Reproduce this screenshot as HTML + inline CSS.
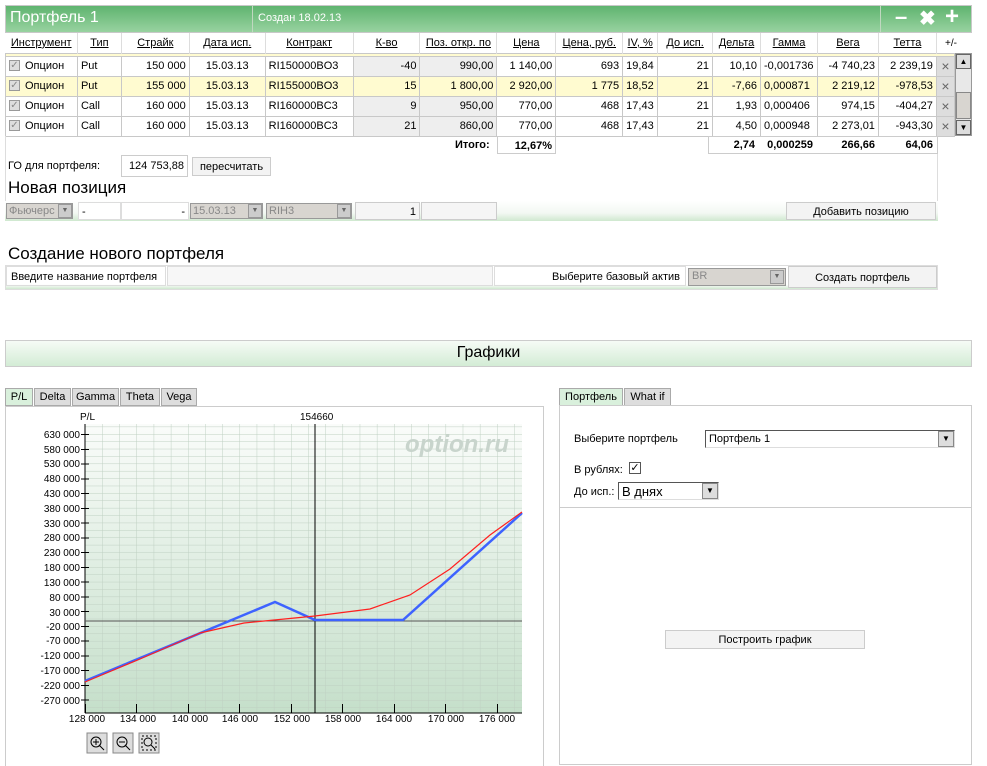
<!DOCTYPE html>
<html><head><meta charset="utf-8"><style>
*{box-sizing:border-box;margin:0;padding:0}
body{width:987px;height:758px;background:#fff;position:relative;overflow:hidden;font-family:"Liberation Sans",sans-serif;font-size:11px;color:#000}
.a{position:absolute}
.hdr{left:5px;top:5px;width:967px;height:28px;background:linear-gradient(#5fb46f,#98d2a0);border:1px solid #c8c8c8}
table{border-collapse:collapse;position:absolute;left:5px;font-size:11px}
td{border:1px solid #c8c8c8;height:20px;padding:0 3px;white-space:nowrap}
th{font-weight:normal;text-decoration:underline;height:20px;border-right:1px solid #ddd;background:#fff}
.r{text-align:right}.c{text-align:center}
.g{background:#eee}
.y td{background:#fffbd0}
.cb{display:inline-block;width:11px;height:11px;border:1px solid #999;background:#ddd;vertical-align:middle;margin-right:5px;position:relative;top:-1px;color:#888;font-size:10px;line-height:9px;text-align:center}
.x{background:#ddd;text-align:center;color:#666;font-size:14px;padding:0}
.btn{background:#f3f3f3;border:1px solid #ccc;text-align:center}
.gray{background:#d8d5d0;border:1px solid #999;color:#888}
.dd{position:absolute;width:14px;height:14px;background:#ccc;border:1px solid #999;font-size:7px;text-align:center;line-height:12px;color:#666}
.tab{top:388px;height:18px;border:1px solid #aaa;background:#ddd;text-align:center;line-height:16px;font-size:11px}
</style></head><body>
<div class="a hdr"></div>
<div class="a" style="left:252px;top:5px;width:1px;height:28px;background:#c0d8c0"></div>
<div class="a" style="left:880px;top:5px;width:1px;height:28px;background:#c0d8c0"></div>
<div class="a" style="left:10px;top:9px;color:#fff;font-size:16px">Портфель 1</div>
<div class="a" style="left:258px;top:12px;color:#fff;font-size:11px">Создан 18.02.13</div>
<div class="a" style="left:895px;top:4px;color:#fff;font-size:22px;font-weight:bold">&#8211;</div>
<div class="a" style="left:919px;top:6px;color:#fff;font-size:20px;font-weight:bold">&#10006;</div>
<div class="a" style="left:945px;top:3px;color:#fff;font-size:24px;font-weight:bold">+</div>

<table style="top:33px;width:950px">
<tr><th style="width:72px">Инструмент</th><th style="width:44px">Тип</th><th style="width:68px">Страйк</th><th style="width:76px">Дата исп.</th><th style="width:88px">Контракт</th><th style="width:67px">К-во</th><th style="width:77px">Поз. откр. по</th><th style="width:59px">Цена</th><th style="width:67px">Цена, руб.</th><th style="width:35px">IV, %</th><th style="width:55px">До исп.</th><th style="width:48px">Дельта</th><th style="width:57px">Гамма</th><th style="width:61px">Вега</th><th style="width:58px">Тетта</th><th style="width:18px;text-decoration:none;border:none"></th></tr>
<tr class="y"><td colspan="16" style="height:3px;padding:0"></td></tr>
<tr><td><span class="cb">✓</span>Опцион</td><td>Put</td><td class="r">150 000</td><td class="c">15.03.13</td><td>RI150000BO3</td><td class="r g">-40</td><td class="r g">990,00</td><td class="r">1 140,00</td><td class="r">693</td><td>19,84</td><td class="r">21</td><td class="r">10,10</td><td>-0,001736</td><td class="r">-4 740,23</td><td class="r">2 239,19</td><td class="x">×</td></tr>
<tr class="y"><td><span class="cb">✓</span>Опцион</td><td>Put</td><td class="r">155 000</td><td class="c">15.03.13</td><td>RI155000BO3</td><td class="r">15</td><td class="r">1 800,00</td><td class="r">2 920,00</td><td class="r">1 775</td><td>18,52</td><td class="r">21</td><td class="r">-7,66</td><td>0,000871</td><td class="r">2 219,12</td><td class="r">-978,53</td><td class="x" style="background:#ddd">×</td></tr>
<tr><td><span class="cb">✓</span>Опцион</td><td>Call</td><td class="r">160 000</td><td class="c">15.03.13</td><td>RI160000BC3</td><td class="r g">9</td><td class="r g">950,00</td><td class="r">770,00</td><td class="r">468</td><td>17,43</td><td class="r">21</td><td class="r">1,93</td><td>0,000406</td><td class="r">974,15</td><td class="r">-404,27</td><td class="x">×</td></tr>
<tr><td><span class="cb">✓</span>Опцион</td><td>Call</td><td class="r">160 000</td><td class="c">15.03.13</td><td>RI160000BC3</td><td class="r g">21</td><td class="r g">860,00</td><td class="r">770,00</td><td class="r">468</td><td>17,43</td><td class="r">21</td><td class="r">4,50</td><td>0,000948</td><td class="r">2 273,01</td><td class="r">-943,30</td><td class="x">×</td></tr>
</table>
<div class="a" style="left:945px;top:38px;font-size:10px">+/-</div>
<div class="a" style="left:955px;top:53px;width:17px;height:83px;background:#e8e8e8;border:1px solid #999"></div>
<div class="a" style="left:956px;top:54px;width:15px;height:15px;background:#ddd;border:1px solid #666;font-size:8px;text-align:center;line-height:13px">▲</div>
<div class="a" style="left:956px;top:92px;width:15px;height:27px;background:#d8d5d0;border:1px solid #888"></div>
<div class="a" style="left:956px;top:120px;width:15px;height:15px;background:#ddd;border:1px solid #666;font-size:8px;text-align:center;line-height:13px">▼</div>
<div class="a" style="left:5px;top:136px;width:933px;height:85px;border-left:1px solid #ddd;border-right:1px solid #ddd"></div>
<div class="a" style="left:455px;top:139px;font-weight:bold">Итого:</div>
<div class="a" style="left:497px;top:136px;width:59px;height:18px;border:1px solid #ccc;font-weight:bold;text-align:right;padding:3px 3px 0">12,67%</div>
<div class="a" style="left:708px;top:136px;width:230px;height:18px;border:1px solid #ccc"></div>
<div class="a" style="left:705px;top:139px;width:50px;text-align:right;font-weight:bold">2,74</div>
<div class="a" style="left:760px;top:139px;width:53px;text-align:right;font-weight:bold">0,000259</div>
<div class="a" style="left:818px;top:139px;width:57px;text-align:right;font-weight:bold">266,66</div>
<div class="a" style="left:879px;top:139px;width:54px;text-align:right;font-weight:bold">64,06</div>

<div class="a" style="left:8px;top:160px">ГО для портфеля:</div>
<div class="a" style="left:121px;top:155px;width:67px;height:22px;border:1px solid #ccc;text-align:right;padding:4px 3px 0">124 753,88</div>
<div class="a btn" style="left:192px;top:157px;width:79px;height:19px;padding-top:3px">пересчитать</div>
<div class="a" style="left:8px;top:178px;font-size:17px">Новая позиция</div>
<div class="a" style="left:5px;top:201px;width:933px;height:20px;background:linear-gradient(#fff 0,#f3f8f3 60%,#cfe8cf)"></div>
<div class="a gray" style="left:6px;top:203px;width:67px;height:16px;padding:1px 2px">Фьючерс</div>
<div class="dd" style="left:58px;top:204px">▼</div>
<div class="a" style="left:78px;top:202px;width:43px;height:18px;background:#fff;border:1px solid #ddd;padding:3px">-</div>
<div class="a" style="left:121px;top:202px;width:68px;height:18px;background:#fff;border:1px solid #ddd;padding:3px;text-align:right">-</div>
<div class="a gray" style="left:190px;top:203px;width:73px;height:16px;padding:1px 2px">15.03.13</div>
<div class="dd" style="left:248px;top:204px">▼</div>
<div class="a gray" style="left:266px;top:203px;width:86px;height:16px;padding:1px 2px">RIH3</div>
<div class="dd" style="left:337px;top:204px">▼</div>
<div class="a" style="left:355px;top:202px;width:65px;height:18px;background:#f5f5f5;border:1px solid #ccc;padding:3px;text-align:right">1</div>
<div class="a" style="left:421px;top:202px;width:76px;height:18px;background:#f5f5f5;border:1px solid #ccc"></div>
<div class="a btn" style="left:786px;top:202px;width:150px;height:18px;padding-top:3px">Добавить позицию</div>

<div class="a" style="left:8px;top:244px;font-size:17px">Создание нового портфеля</div>
<div class="a" style="left:5px;top:265px;width:933px;height:25px;border:1px solid #ddd;background:linear-gradient(#fff 80%,#cfe8cf)"></div>
<div class="a" style="left:6px;top:266px;width:160px;height:20px;border:1px solid #ddd;padding:4px 4px 0">Введите название портфеля</div>
<div class="a" style="left:167px;top:266px;width:326px;height:20px;border:1px solid #ddd;background:#f7f7f7"></div>
<div class="a" style="left:494px;top:266px;width:192px;height:20px;border:1px solid #ddd;padding:4px 5px 0;text-align:right">Выберите базовый актив</div>
<div class="a gray" style="left:688px;top:268px;width:98px;height:18px;padding:1px 3px">BR</div>
<div class="dd" style="left:770px;top:270px">▼</div>
<div class="a btn" style="left:788px;top:266px;width:149px;height:22px;padding-top:5px">Создать портфель</div>

<div class="a" style="left:5px;top:340px;width:967px;height:27px;border:1px solid #ccc;background:linear-gradient(#f6fbf6,#d3ecd5);text-align:center;font-size:16px;padding-top:3px">Графики</div>

<div class="a tab" style="left:5px;width:28px;background:#d9f0dc">P/L</div>
<div class="a tab" style="left:34px;width:37px">Delta</div>
<div class="a tab" style="left:72px;width:47px">Gamma</div>
<div class="a tab" style="left:120px;width:40px">Theta</div>
<div class="a tab" style="left:161px;width:36px">Vega</div>
<div class="a" style="left:5px;top:406px;width:539px;height:360px;border-left:1px solid #ccc;border-right:1px solid #ccc;border-top:1px solid #ccc"></div>
<svg class="a" style="left:0;top:0" width="545" height="758" font-family="Liberation Sans" font-size="10">
<defs>
<linearGradient id="bg" x1="0" y1="0" x2="0" y2="1"><stop offset="0" stop-color="#fafcfa"/><stop offset="1" stop-color="#c5dfca"/></linearGradient>
<pattern id="gr" x="85" y="434" width="17.17" height="7.39" patternUnits="userSpaceOnUse"><path d="M0 0V7.39M0 0H17.17" stroke="#bfd0c2" stroke-width="1" fill="none"/></pattern>
</defs>
<rect x="85" y="424" width="437" height="289" fill="url(#bg)"/>
<rect x="85" y="424" width="437" height="289" fill="url(#gr)"/>
<text x="405" y="452" font-size="24" font-weight="bold" font-style="italic" fill="#c8d4cc">option.ru</text>
<line x1="85" y1="424" x2="85" y2="713" stroke="#000"/>
<line x1="85" y1="713" x2="522" y2="713" stroke="#000"/>
<line x1="85" y1="621" x2="522" y2="621" stroke="#555"/>
<line x1="315" y1="424" x2="315" y2="713" stroke="#000"/>
<g stroke="#000">
<path d="M81 434.5h8M81 449.5h8M81 464h8M81 479h8M81 493.5h8M81 508.5h8M81 523h8M81 538h8M81 552.5h8M81 567.5h8M81 582h8M81 597h8M81 611.5h8M81 626.5h8M81 641h8M81 656h8M81 670.5h8M81 685.5h8M81 700h8"/>
<path d="M85.5 704v9M136.5 704v9M188.5 704v9M239.5 704v9M291.5 704v9M342.5 704v9M394.5 704v9M445.5 704v9M497.5 704v9"/>
</g>
<text x="80" y="420">P/L</text>
<text x="300" y="420">154660</text>
<g text-anchor="end">
<text x="80" y="438">630 000</text><text x="80" y="453">580 000</text><text x="80" y="467">530 000</text><text x="80" y="482">480 000</text><text x="80" y="497">430 000</text><text x="80" y="512">380 000</text><text x="80" y="527">330 000</text><text x="80" y="541">280 000</text><text x="80" y="556">230 000</text><text x="80" y="571">180 000</text><text x="80" y="586">130 000</text><text x="80" y="601">80 000</text><text x="80" y="616">30 000</text><text x="80" y="630">-20 000</text><text x="80" y="644">-70 000</text><text x="80" y="659">-120 000</text><text x="80" y="674">-170 000</text><text x="80" y="689">-220 000</text><text x="80" y="704">-270 000</text>
</g>
<g text-anchor="middle">
<text x="87" y="722">128 000</text><text x="138" y="722">134 000</text><text x="190" y="722">140 000</text><text x="240" y="722">146 000</text><text x="292" y="722">152 000</text><text x="343" y="722">158 000</text><text x="394" y="722">164 000</text><text x="446" y="722">170 000</text><text x="497" y="722">176 000</text>
</g>
<polyline points="85,681 275,602 315,620 403,620 522,513" fill="none" stroke="#3e63ff" stroke-width="2.5"/>
<polyline points="85,682 140,659 200,633 244,623 315,616 370,609 410,595 450,569 490,535 522,512" fill="none" stroke="#ff2020" stroke-width="1.2"/>
<g fill="#ddd" stroke="#888"><rect x="87" y="733" width="20" height="20"/><rect x="113" y="733" width="20" height="20"/><rect x="139" y="733" width="20" height="20"/></g>
<g fill="none" stroke="#000"><circle cx="96" cy="742" r="5"/><path d="M99 745l5 5M93 742h6M96 739v6"/><circle cx="122" cy="742" r="5"/><path d="M125 745l5 5M119 742h6"/><circle cx="148" cy="742" r="4"/><path d="M151 745l4 4"/><rect x="142" y="736" width="14" height="14" stroke-dasharray="2 2"/></g>
</svg>

<div class="a tab" style="left:559px;width:64px;background:#d9f0dc">Портфель</div>
<div class="a tab" style="left:624px;width:47px">What if</div>
<div class="a" style="left:559px;top:405px;width:413px;height:360px;border:1px solid #ccc"></div>
<div class="a" style="left:559px;top:507px;width:413px;height:1px;background:#ccc"></div>
<div class="a" style="left:574px;top:433px">Выберите портфель</div>
<div class="a" style="left:705px;top:430px;width:250px;height:18px;border:1px solid #555;border-right-color:#ddd;border-bottom-color:#ddd;padding:2px 3px">Портфель 1</div>
<div class="a" style="left:938px;top:431px;width:16px;height:16px;background:#ddd;border:1px solid #888;font-size:8px;text-align:center;line-height:14px">▼</div>
<div class="a" style="left:574px;top:464px">В рублях:</div>
<div class="a" style="left:629px;top:462px;width:12px;height:12px;border:1px solid #555;font-size:11px;line-height:10px;text-align:center">✓</div>
<div class="a" style="left:574px;top:486px">До исп.:</div>
<div class="a" style="left:618px;top:482px;width:101px;height:18px;border:1px solid #555;border-right-color:#ddd;border-bottom-color:#ddd;padding:1px 3px;font-size:13px">В днях</div>
<div class="a" style="left:702px;top:483px;width:16px;height:16px;background:#ddd;border:1px solid #888;font-size:8px;text-align:center;line-height:14px">▼</div>
<div class="a btn" style="left:665px;top:630px;width:200px;height:19px;padding-top:3px">Построить график</div>
</body></html>
